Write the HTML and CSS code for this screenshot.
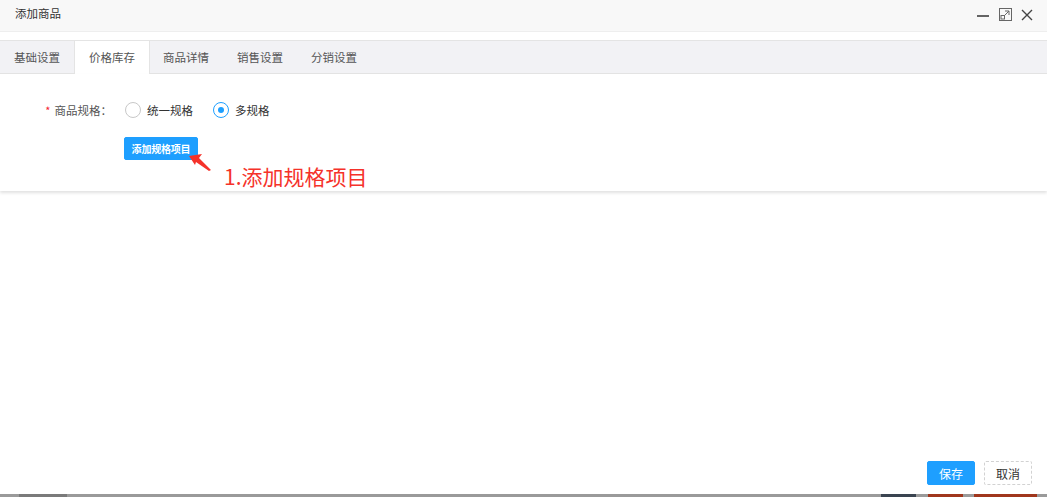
FILE: index.html
```html
<!DOCTYPE html>
<html lang="zh-CN">
<head>
    <meta charset="UTF-8">
    <title>添加商品</title>
    <link rel="stylesheet" href="styles.css">
</head>
<body>

<div class="dialog">
    <div class="title-bar">
        <span class="title">添加商品</span>
        <div class="win-tools">
            <svg width="14" height="14" viewBox="0 0 14 14"><line x1="1" y1="8" x2="13" y2="8" stroke="#333" stroke-width="1.5"/></svg>
            <svg width="13" height="13" viewBox="0 0 13 13"><rect x="0.5" y="0.5" width="12" height="12" fill="none" stroke="#666"/><path d="M6 3h4v4M10 3L5 8" fill="none" stroke="#666"/><rect x="2" y="7.5" width="3.5" height="3.5" fill="none" stroke="#666"/></svg>
            <svg width="12" height="12" viewBox="0 0 12 12"><path d="M1 1L11 11M11 1L1 11" stroke="#444" stroke-width="1.4"/></svg>
        </div>
    </div>

    <div class="tabs">
        <div class="tab">基础设置</div>
        <div class="tab active">价格库存</div>
        <div class="tab">商品详情</div>
        <div class="tab">销售设置</div>
        <div class="tab">分销设置</div>
    </div>

    <div class="panel">
        <div class="form-row">
            <label class="form-label"><span class="req">*</span>商品规格：</label>
            <div class="radios">
                <span class="radio"><i class="dot"></i>统一规格</span>
                <span class="radio checked"><i class="dot"></i>多规格</span>
            </div>
        </div>
        <div class="form-row">
            <button class="btn btn-sm">添加规格项目</button>
        </div>

        <svg class="arrow" width="30" height="26" viewBox="0 0 30 26">
            <path d="M3 6L16 4L13 8L25 20L23 21L10 12L9 15Z" fill="#f5322a"/>
        </svg>
        <div class="note">1.添加规格项目</div>
    </div>

    <div class="footer">
        <button class="btn">保存</button>
        <button class="btn btn-plain">取消</button>
    </div>

    <div class="strip">
        <span class="s1"></span><span class="s2"></span><span class="s3"></span><span class="s4"></span>
    </div>
</div>

</body>
</html>
```

FILE: styles.css
```css
body {
    margin: 0;
    font-family: "Noto Sans CJK SC", "Noto Sans", sans-serif;
    font-size: 12px;
    color: #333;
    background-color: #fff;
}

.dialog {
    display: flex;
    flex-direction: column;
    height: 100vh;
    overflow: hidden;
}

.title-bar {
    height: 31px;
    display: flex;
    align-items: center;
    justify-content: space-between;
    padding: 0 14px 0 15px;
    background-color: #f8f8f8;
    border-bottom: 1px solid #eee;
    flex-shrink: 0;
}

.title {
    font-size: 11.5px;
    margin-top: -5px;
}

.win-tools {
    display: flex;
    align-items: center;
    gap: 9px;
    margin-top: -2px;
}

.tabs {
    display: flex;
    margin-top: 8px;
    height: 32px;
    background-color: #f2f2f5;
    border-top: 1px solid #e4e4e4;
    border-bottom: 1px solid #e4e4e4;
    flex-shrink: 0;
}

.tab {
    width: 74px;
    box-sizing: border-box;
    text-align: center;
    line-height: 32px;
    font-size: 11.5px;
    color: #555;
}

.tab.active {
    background-color: #fff;
    border-left: 1px solid #e4e4e4;
    border-right: 1px solid #e4e4e4;
    height: 33px;
    width: 76px;
    margin: 0 -1px 0 0;
}

.panel {
    position: relative;
    height: 117px;
    padding-top: 24px;
    box-sizing: border-box;
    box-shadow: 0 2px 3px rgba(0, 0, 0, 0.12);
    flex-shrink: 0;
}

.form-row {
    display: flex;
    align-items: center;
    min-height: 24px;
    padding-left: 124px;
}

.form-row + .form-row {
    margin-top: 14px;
}

.form-label {
    width: 124px;
    margin-left: -124px;
    padding-right: 12px;
    box-sizing: border-box;
    text-align: right;
    font-size: 11.5px;
    color: #555;
}

.req {
    color: #f5222d;
    margin-right: 4px;
    font-size: 11px;
}

.radios {
    display: flex;
    gap: 20px;
    margin-left: 1px;
}

.radio {
    display: flex;
    align-items: center;
    gap: 6px;
    font-size: 11.5px;
    color: #333;
}

.dot {
    width: 16px;
    height: 16px;
    box-sizing: border-box;
    border: 1px solid #c8c8c8;
    border-radius: 50%;
    display: inline-block;
    position: relative;
}

.radio.checked .dot {
    border-color: #1e9fff;
}

.radio.checked .dot::after {
    content: "";
    position: absolute;
    left: 4px;
    top: 4px;
    width: 6px;
    height: 6px;
    border-radius: 50%;
    background-color: #1e9fff;
}

.btn {
    height: 24px;
    padding: 0 12px;
    border: 1px solid #1e9fff;
    border-radius: 2px;
    background-color: #1e9fff;
    color: #fff;
    font-family: inherit;
    font-size: 12px;
    cursor: pointer;
}

.btn-sm {
    height: 23px;
    width: 74px;
    padding: 0;
    font-size: 10px;
    font-weight: bold;
    letter-spacing: -0.2px;
}

.btn-plain {
    background-color: #fff;
    color: #333;
    border: 1px dashed #d2d2d2;
}

.arrow {
    position: absolute;
    left: 186px;
    top: 76px;
}

.note {
    position: absolute;
    left: 224px;
    top: 89px;
    font-size: 21px;
    line-height: 26px;
    color: #f5322a;
}

.footer {
    margin-top: auto;
    display: flex;
    justify-content: flex-end;
    gap: 9px;
    padding: 0 15px 9px 0;
}

.footer .btn {
    width: 48px;
    padding: 0;
    font-size: 12px;
}

.strip {
    height: 3px;
    background-color: #9a9a9a;
    display: flex;
    flex-shrink: 0;
}

.strip span {
    display: block;
    height: 3px;
}

.s1 { width: 48px; margin-left: 19px; background-color: #7a7a7a; }
.s2 { width: 35px; margin-left: 814px; background-color: #3a4450; }
.s3 { width: 35px; margin-left: 12px; background-color: #a0361c; }
.s4 { width: 63px; margin-left: 11px; background-color: #a0361c; }
```
